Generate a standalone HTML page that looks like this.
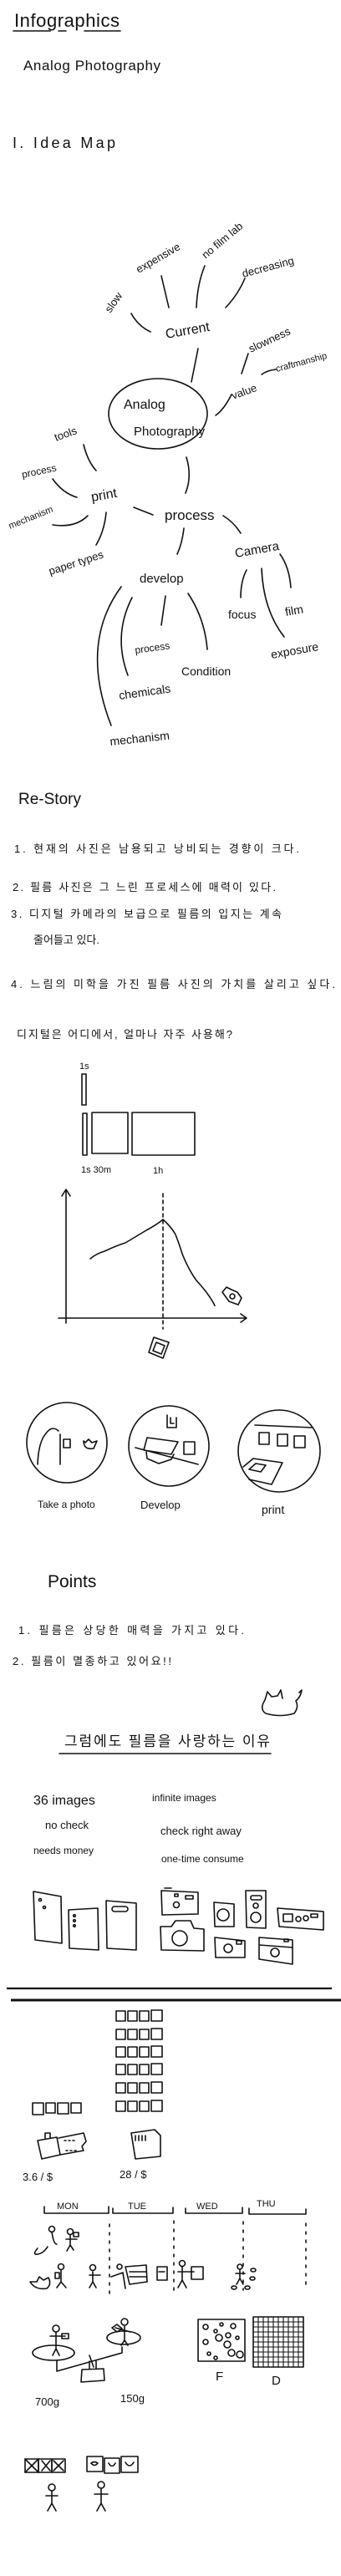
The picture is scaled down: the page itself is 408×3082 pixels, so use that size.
<!DOCTYPE html>
<html><head><meta charset="utf-8"><style>
html,body{margin:0;padding:0;background:#fff;}
svg{display:block;}
text{font-family:"Liberation Sans","Noto Sans CJK KR",sans-serif;fill:#111;}
.k{font-family:"Liberation Sans","Noto Sans CJK KR",sans-serif;font-size:13px;}
</style></head><body>
<svg width="408" height="3082" viewBox="0 0 408 3082" xmlns="http://www.w3.org/2000/svg">
<defs>
<g id="row" fill="none" stroke="#111" stroke-width="1.6" stroke-linejoin="round"><rect x="139" y="0" width="11" height="12"/><rect x="153" y="0" width="11" height="12"/><rect x="167" y="0" width="11" height="12"/><rect x="181" y="-1" width="13" height="13"/></g>
</defs>
<g fill="none" stroke="#111" stroke-width="1.6" stroke-linecap="round" stroke-linejoin="round">
<path d="M16 37 H60 M70 37 H79 M101 37 H144"/>
<path d="M157 375 Q165 390 180 397"/>
<path d="M193 330 L202 368"/>
<path d="M245 318 Q236 340 235 368"/>
<path d="M293 333 Q285 352 270 368"/>
<path d="M237 417 L229 457"/>
<path d="M297 423 L289 447"/>
<path d="M313 448 Q320 443 330 442"/>
<path d="M277 472 Q268 490 258 497"/>
<ellipse cx="189" cy="495" rx="59" ry="42"/>
<path d="M100 532 Q105 552 115 563"/>
<path d="M63 573 Q75 590 92 595"/>
<path d="M63 628 Q90 632 105 617"/>
<path d="M115 652 Q125 635 127 613"/>
<path d="M160 607 L183 616"/>
<path d="M223 547 Q230 570 222 590"/>
<path d="M267 617 Q280 625 288 638"/>
<path d="M220 632 Q218 650 212 663"/>
<path d="M295 682 Q288 695 288 715"/>
<path d="M335 663 Q346 678 348 703"/>
<path d="M313 680 Q315 730 340 762"/>
<path d="M198 713 L193 748"/>
<path d="M225 710 Q245 740 248 777"/>
<path d="M158 715 Q135 760 153 808"/>
<path d="M145 702 Q95 770 133 868"/>
<rect x="98" y="1285" width="5" height="37"/>
<rect x="99" y="1332" width="5" height="50"/>
<rect x="110" y="1331" width="43" height="49"/>
<rect x="158" y="1331" width="75" height="51"/>
<path d="M79 1583 V1424 M74 1431 L79 1423 L84 1431"/>
<path d="M70 1577 H295 M288 1572 L295 1577 L288 1582"/>
<path d="M195 1428 V1590" stroke-dasharray="4 4"/>
<path d="M108 1506 Q115 1500 125 1497 Q140 1490 150 1487 Q165 1478 175 1472 Q188 1465 195 1459 Q205 1468 210 1477 Q215 1490 218 1500 Q225 1518 235 1532 Q250 1548 257 1562"/>
<path d="M266 1546 L271 1540 L277 1543 L284 1546 L289 1553 L285 1561 L274 1557 Z"/><circle cx="278" cy="1551" r="3"/>
<path d="M184 1600 L202 1606 L195 1625 L178 1618 Z M187 1606 L197 1610 L193 1620 L183 1616 Z"/>
<circle cx="80" cy="1726" r="48"/>
<circle cx="202" cy="1730" r="48"/>
<circle cx="334" cy="1736" r="49"/>
<path d="M45 1752 Q46 1725 55 1715 Q62 1705 70 1712 M72 1716 V1752 M76 1722 H84 V1732 H76 Z M100 1724 Q100 1735 112 1733 L116 1724 L110 1726 L106 1722 L102 1726 Z"/>
<path d="M200 1693 V1708 H211 V1696 M204 1696 V1703 H208"/>
<path d="M162 1732 L237 1752 M176 1720 L213 1725 L205 1740 L172 1735 Z M175 1737 L176 1745 L190 1751 L205 1746 L208 1740 M220 1725 H233 V1740 H220 Z"/>
<path d="M305 1705 L373 1708 M310 1714 H322 V1728 H310 Z M332 1716 H344 V1730 H332 Z M352 1718 H365 V1732 H352 Z M291 1755 L303 1745 L338 1750 L325 1776 L298 1770"/>
<path d="M298 1758 L306 1751 L318 1753 L312 1761 Z"/>
<path d="M71 2098 H324"/>
<path d="M317 2034 Q310 2045 318 2050 Q335 2055 352 2050 Q358 2042 354 2035 Q360 2030 361 2022 L358 2025 M317 2034 L320 2024 L325 2030 L332 2029 L336 2022 L338 2032"/>
<path d="M40 2263 L73 2269 L74 2325 L42 2321 Z"/><circle cx="48" cy="2273" r="1.5"/><circle cx="53" cy="2282" r="1.5"/>
<path d="M82 2285 L117 2283 L118 2333 L83 2331 Z"/><circle cx="89" cy="2292" r="1.3"/><circle cx="89" cy="2298" r="1.3"/><circle cx="89" cy="2304" r="1.3"/>
<path d="M127 2274 L163 2277 L163 2333 L128 2331 Z"/><rect x="134" y="2281" width="19" height="6" rx="3"/>
<path d="M193 2262 L237 2264 L237 2290 L194 2291 Z M197 2259 H205"/><circle cx="211" cy="2279" r="3.5"/><rect x="222" y="2268" width="9" height="4"/><rect x="209" y="2266" width="4" height="3"/>
<path d="M192 2305 L205 2305 L210 2298 L228 2298 L232 2307 L244 2308 L244 2334 L193 2333 Z"/><circle cx="215" cy="2319" r="9"/>
<path d="M256 2276 L280 2278 L280 2305 L257 2305 Z"/><circle cx="267" cy="2291" r="7"/>
<path d="M294 2262 L318 2262 L318 2307 L295 2306 Z"/><rect x="300" y="2268" width="13" height="5" rx="2"/><circle cx="306" cy="2280" r="3"/><circle cx="306" cy="2294" r="6"/>
<path d="M332 2283 L387 2287 L387 2309 L334 2305 Z"/><rect x="339" y="2290" width="11" height="9"/><circle cx="357" cy="2296" r="3"/><circle cx="366" cy="2295" r="3"/><rect x="372" y="2290" width="8" height="4"/>
<path d="M257 2318 L293 2322 L293 2342 L258 2342 Z"/><circle cx="273" cy="2331" r="5"/><rect x="283" y="2322" width="6" height="4"/>
<path d="M310 2318 L350 2321 L350 2350 L310 2344 Z M310 2327 L350 2330"/><circle cx="329" cy="2336" r="5"/><rect x="340" y="2320" width="5" height="3"/>
</g>
<path d="M8 2379 H397" stroke="#111" stroke-width="2.2"/>
<path d="M13 2393 H408" stroke="#111" stroke-width="3"/>
<use href="#row" y="2406"/><use href="#row" y="2428"/><use href="#row" y="2449"/><use href="#row" y="2470"/><use href="#row" y="2492"/><use href="#row" y="2514"/>
<g fill="none" stroke="#111" stroke-width="1.6" stroke-linejoin="round" stroke-linecap="round">
<rect x="39" y="2516" width="13" height="14"/><rect x="55" y="2516" width="11" height="12"/><rect x="69" y="2516" width="13" height="13"/><rect x="85" y="2516" width="12" height="12"/>
<path d="M45 2561 L68 2557 L72 2578 L50 2583 Z M54 2559 V2552 H60 V2558 M70 2558 L100 2552 L103 2562 L98 2568 L100 2573 L72 2578"/>
<path d="M77 2561 H90 M79 2573 H93" stroke-dasharray="2 3"/>
<path d="M157 2552 L185 2548 L192 2555 L192 2580 L162 2583 Z M162 2555 V2561 M166 2555 V2561 M170 2555 V2561 M174 2555 V2561"/>
<path d="M53 2640 V2648 H130 V2640 M135 2642 V2648 H207 V2641 M222 2642 V2648 H290 V2641 M298 2642 V2649 H366 V2643"/>
<path d="M131 2661 V2745 M208 2657 V2745 M291 2658 V2740 M366 2660 V2737" stroke-dasharray="3 7"/>
<path d="M45 2690 Q38 2698 45 2697 Q52 2696 57 2688 M62 2670 Q64 2685 68 2685 M84 2674 V2686 L80 2693 M84 2686 L88 2692 M79 2679 H92"/><circle cx="62" cy="2667" r="3.5"/><circle cx="84" cy="2670" r="3.5"/><rect x="88" y="2671" width="6" height="5"/>
<path d="M36 2730 Q42 2740 56 2738 Q62 2733 58 2725 L52 2728 L47 2724 L44 2730 Z M73 2716 V2730 L68 2737 M73 2730 L79 2737 M66 2719 H71 V2726 H66 Z"/><circle cx="73" cy="2712" r="3.5"/>
<path d="M111 2718 V2730 L107 2737 M111 2730 L115 2737 M107 2722 H120"/><circle cx="111" cy="2713" r="3.5"/>
<path d="M133 2724 L147 2719 L150 2738 M150 2712 L175 2710 L176 2730 L155 2733 Z M155 2718 H175 M155 2724 H175 M188 2712 H200 V2728 H188 Z M190 2718 H197 M218 2712 V2728 L213 2737 M218 2728 L223 2737 M213 2718 H232 M229 2712 H243 V2727 H229 Z"/><circle cx="143" cy="2712" r="3"/><circle cx="218" cy="2708" r="3.5"/>
<path d="M287 2716 V2726 L283 2733 M287 2726 L291 2733 M282 2720 H293"/><circle cx="287" cy="2712" r="3"/><ellipse cx="303" cy="2716" rx="3" ry="2"/><ellipse cx="302" cy="2726" rx="3" ry="2"/><ellipse cx="296" cy="2737" rx="3" ry="2"/><ellipse cx="280" cy="2737" rx="3" ry="2"/>
<ellipse cx="64" cy="2815" rx="25" ry="9"/><ellipse cx="148" cy="2797" rx="20" ry="8"/>
<path d="M67 2790 V2810 L63 2818 M67 2810 L71 2818 M60 2795 H78 M74 2792 H82 V2798 H74 Z"/><circle cx="67" cy="2786" r="4"/>
<path d="M149 2783 V2800 L145 2806 M149 2800 L153 2806 M138 2785 L156 2790 M134 2785 L140 2781 L146 2786 L140 2790 Z"/><circle cx="149" cy="2778" r="4"/>
<path d="M68 2825 V2837 L146 2815 V2808 M107 2818 L112 2832 M97 2850 L98 2835 L124 2834 L125 2848 Z M107 2834 V2825 M115 2834 V2825"/>
<rect x="237" y="2775" width="56" height="50"/>
<circle cx="246" cy="2784" r="3"/><circle cx="258" cy="2789" r="2"/><circle cx="265" cy="2781" r="2"/><circle cx="279" cy="2783" r="3"/><circle cx="262" cy="2797" r="4"/><circle cx="273" cy="2794" r="3"/><circle cx="246" cy="2802" r="3"/><circle cx="272" cy="2805" r="4"/><circle cx="284" cy="2797" r="2"/><circle cx="277" cy="2815" r="4"/><circle cx="287" cy="2817" r="4"/><circle cx="250" cy="2816" r="2"/><circle cx="258" cy="2821" r="2"/>
<rect x="303" y="2772" width="60" height="60"/>
<path d="M303 2778 H363 M303 2784 H363 M303 2790 H363 M303 2796 H363 M303 2802 H363 M303 2808 H363 M303 2814 H363 M303 2820 H363 M303 2826 H363 M309 2772 V2832 M315 2772 V2832 M321 2772 V2832 M327 2772 V2832 M333 2772 V2832 M339 2772 V2832 M345 2772 V2832 M351 2772 V2832 M357 2772 V2832" stroke-width="1.1"/>
<rect x="30" y="2942" width="16" height="16"/><rect x="46" y="2942" width="16" height="16"/><rect x="62" y="2942" width="16" height="16"/>
<path d="M30 2942 L46 2958 M46 2942 L30 2958 M50 2944 L60 2956 M60 2944 L50 2956 M64 2944 L76 2956 M76 2944 L64 2956"/>
<rect x="104" y="2939" width="19" height="18"/><rect x="125" y="2941" width="18" height="18"/><rect x="145" y="2939" width="20" height="19"/>
<path d="M109 2947 Q113 2944 117 2947 Q113 2952 109 2947 M130 2947 Q134 2954 138 2947 M150 2946 Q155 2954 160 2946"/>
<path d="M62 2980 V2995 L57 3004 M62 2995 L67 3004 M55 2986 H69 M121 2978 V2995 L116 3004 M121 2995 L126 3004 M113 2984 H129"/><circle cx="62" cy="2976" r="4"/><circle cx="121" cy="2973" r="4"/>
</g>
<text x="17" y="32" font-size="22" textLength="126" font-weight="normal">Infographics</text>
<text x="28" y="84" font-size="17" textLength="164">Analog Photography</text>
<text x="15" y="177" font-size="18" textLength="123">I. Idea Map</text>
<g font-size="13">
<text transform="translate(132,375) rotate(-55)">slow</text>
<text transform="translate(166,327) rotate(-30)">expensive</text>
<text transform="translate(246,310) rotate(-40)">no film lab</text>
<text transform="translate(291,332) rotate(-15)">decreasing</text>
<text transform="translate(199,405) rotate(-10)" font-size="16">Current</text>
<text transform="translate(300,422) rotate(-25)">slowness</text>
<text transform="translate(331,445) rotate(-15)" font-size="11">craftmanship</text>
<text transform="translate(279,478) rotate(-20)">value</text>
<text x="148" y="489" font-size="16">Analog</text>
<text x="160" y="521" font-size="15">Photography</text>
<text transform="translate(67,528) rotate(-20)">tools</text>
<text transform="translate(27,572) rotate(-12)" font-size="12">process</text>
<text transform="translate(110,600) rotate(-10)" font-size="16">print</text>
<text transform="translate(12,633) rotate(-22)" font-size="11">mechanism</text>
<text transform="translate(60,688) rotate(-18)">paper types</text>
<text x="197" y="622" font-size="17">process</text>
<text transform="translate(282,667) rotate(-10)" font-size="15">Camera</text>
<text x="167" y="697" font-size="15">develop</text>
<text x="273" y="740" font-size="14">focus</text>
<text transform="translate(342,737) rotate(-10)" font-size="14">film</text>
<text transform="translate(325,788) rotate(-10)" font-size="14">exposure</text>
<text transform="translate(162,782) rotate(-8)" font-size="12">process</text>
<text x="217" y="808" font-size="14">Condition</text>
<text transform="translate(143,837) rotate(-8)" font-size="14">chemicals</text>
<text transform="translate(132,892) rotate(-6)" font-size="14">mechanism</text>
</g>
<text x="22" y="962" font-size="19">Re-Story</text>
<g class="k">
<text x="17" y="1020" textLength="341">1. 현재의 사진은 남용되고 낭비되는 경향이 크다.</text>
<text x="15" y="1066" textLength="315">2. 필름 사진은 그 느린 프로세스에 매력이 있다.</text>
<text x="13" y="1098" textLength="324">3. 디지털 카메라의 보급으로 필름의 입지는 계속</text>
<text x="40" y="1129">줄어들고 있다.</text>
<text x="13" y="1182" textLength="388">4. 느림의 미학을 가진 필름 사진의 가치를 살리고 싶다.</text>
<text x="20" y="1242" textLength="258">디지털은 어디에서, 얼마나 자주 사용해?</text>
</g>
<g font-size="11">
<text x="95" y="1279">1s</text>
<text x="97" y="1403">1s 30m</text>
<text x="183" y="1404">1h</text>
<text x="45" y="1804" font-size="12">Take a photo</text>
<text x="168" y="1805" font-size="13">Develop</text>
<text x="313" y="1811" font-size="14">print</text>
</g>
<text x="57" y="1899" font-size="21">Points</text>
<g class="k">
<text x="22" y="1955" textLength="270">1. 필름은 상당한 매력을 가지고 있다.</text>
<text x="15" y="1992" textLength="190">2. 필름이 멸종하고 있어요!!</text>
<text x="77" y="2089" font-size="17" textLength="246">그럼에도 필름을 사랑하는 이유</text>
</g>
<g font-size="13">
<text x="40" y="2159" font-size="16">36 images</text>
<text x="54" y="2188">no check</text>
<text x="40" y="2218" font-size="12">needs money</text>
<text x="182" y="2155" font-size="12">infinite images</text>
<text x="192" y="2195">check right away</text>
<text x="193" y="2228" font-size="12">one-time consume</text>
<text x="27" y="2609">3.6 / $</text>
<text x="143" y="2606">28 / $</text>
<text x="68" y="2643" font-size="11">MON</text>
<text x="153" y="2643" font-size="11">TUE</text>
<text x="235" y="2643" font-size="11">WED</text>
<text x="307" y="2640" font-size="11">THU</text>
<text x="42" y="2878">700g</text>
<text x="144" y="2874">150g</text>
<text x="258" y="2848" font-size="15">F</text>
<text x="325" y="2853" font-size="15">D</text>
</g>
</svg>
</body></html>
